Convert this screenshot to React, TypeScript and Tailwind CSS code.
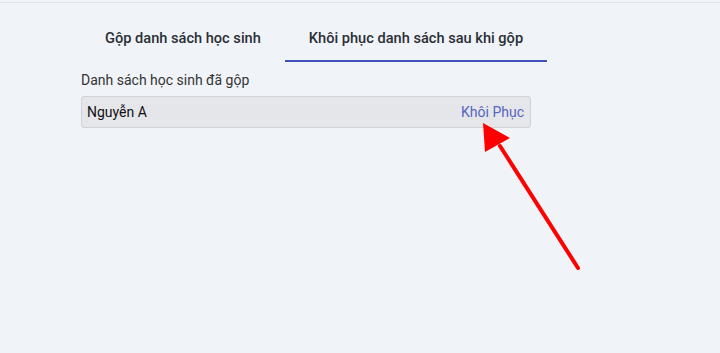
export default function App() {
  return (
    <div className="relative h-[353px] w-[720px] overflow-hidden bg-[#f0f3f8] font-['Roboto',sans-serif]">
      <div className="mt-[2px] h-px bg-[#e1e4ea]" />

      <div className="pl-[81px] pt-[24px]">
        <div className="flex text-[14.6px] font-medium text-[#2b2f36]">
          <button className="h-[35px] border-b-2 border-transparent px-6 pb-[10px]">
            Gộp danh sách học sinh
          </button>
          <button className="h-[35px] border-b-2 border-[#3f51b5] px-6 pb-[10px]">
            Khôi phục danh sách sau khi gộp
          </button>
        </div>

        <div className="mt-[8px] text-[14px] leading-[20px] text-[#333]">
          Danh sách học sinh đã gộp
        </div>

        <div className="mt-[6px] flex h-[32px] w-[450px] items-center justify-between rounded-[3px] border border-[#cfd2d8] bg-[#e5e6ea] pl-[5px] pr-[6px]">
          <span className="text-[14px] text-[#111]">Nguyễn A</span>
          <button className="text-[14px] text-[#5565c0]">Khôi Phục</button>
        </div>
      </div>

      <svg
        className="pointer-events-none absolute left-0 top-0"
        width="720"
        height="353"
        viewBox="0 0 720 353"
      >
        <line x1="578" y1="268" x2="500" y2="146" stroke="#ff0000" strokeWidth="4" strokeLinecap="round" />
        <polygon points="483,123 510,138 485,152" fill="#ff0000" />
      </svg>
    </div>
  );
}
